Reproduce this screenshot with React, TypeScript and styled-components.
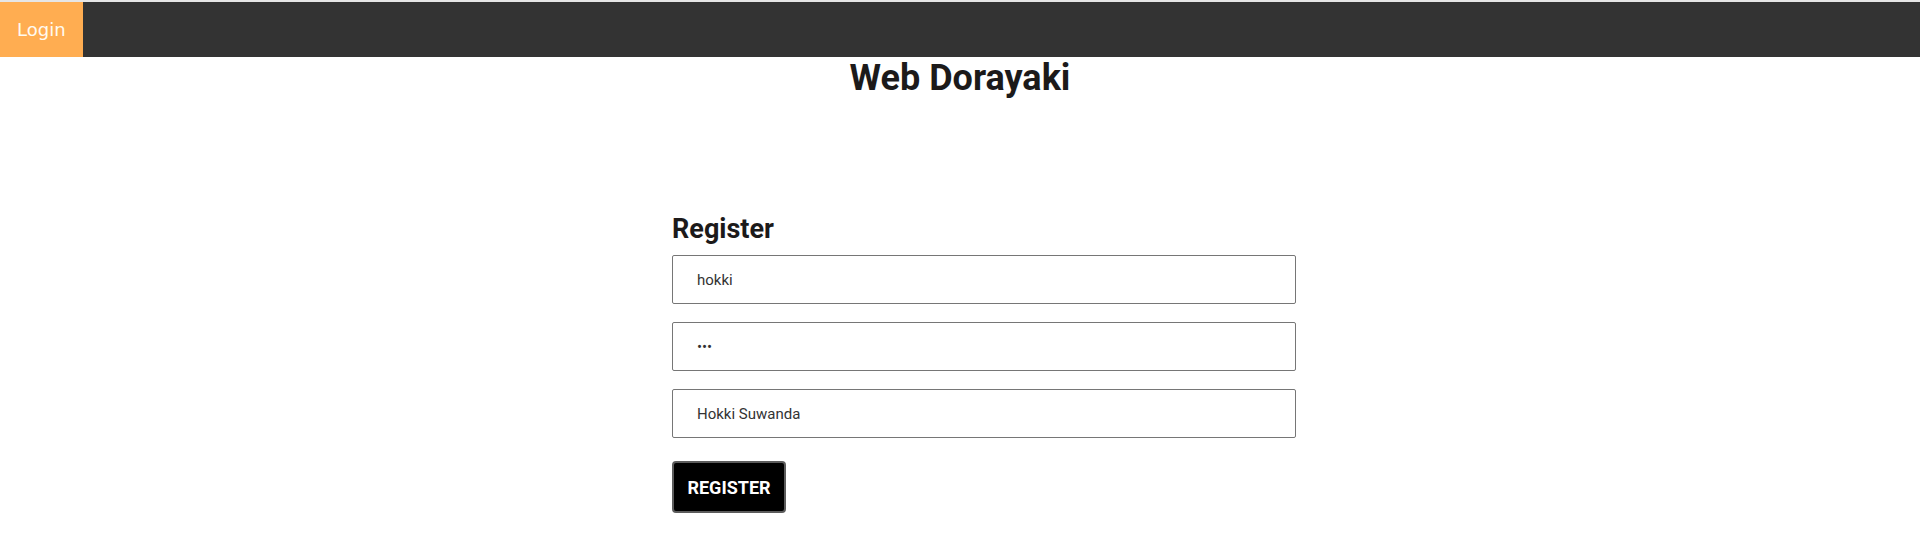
import React from "react";
import styled, { createGlobalStyle } from "styled-components";

const Global = createGlobalStyle`
  html, body { margin: 0; padding: 0; background: #fff; }
  body { font-family: Roboto, "Liberation Sans", sans-serif; }
  * { box-sizing: border-box; }
`;

const TopStrip = styled.div`
  height: 2px;
  background: #e6e6e6;
`;

const NavBar = styled.nav`
  display: flex;
  align-items: stretch;
  height: 55px;
  background: #333333;
`;

const NavLink = styled.a<{ $active?: boolean }>`
  display: flex;
  align-items: center;
  padding: 0 17px;
  font-family: "DejaVu Sans", Verdana, sans-serif;
  font-size: 18px;
  color: #fffaf0;
  text-decoration: none;
  background: ${(p) => (p.$active ? "#ffad51" : "transparent")};
`;

const Title = styled.h1`
  margin: 2px 0 0;
  text-align: center;
  font-family: Roboto, sans-serif;
  font-weight: 700;
  font-size: 36px;
  line-height: 39px;
  color: #1c1a1a;
`;

const FormWrap = styled.form`
  display: flex;
  flex-direction: column;
  width: 32.5%;
  margin: 117px 0 0 35%;
`;

const FormTitle = styled.h2`
  margin: 0 0 12px;
  font-family: Roboto, sans-serif;
  font-weight: 700;
  font-size: 27px;
  line-height: 28px;
  color: #1c1a1a;
`;

const Field = styled.input`
  height: 49px;
  margin-bottom: 18px;
  padding: 0 24px;
  border: 1px solid #767676;
  border-radius: 2px;
  font-family: Roboto, sans-serif;
  font-size: 15px;
  color: #333;
  outline: none;
  background: #fff;
`;

const Submit = styled.button`
  align-self: flex-start;
  width: 114px;
  height: 52px;
  margin-top: 5px;
  background: #000;
  color: #fff;
  border: 2px solid #5c5c5c;
  border-radius: 4px;
  font-family: Roboto, sans-serif;
  font-weight: 700;
  font-size: 18px;
  cursor: pointer;
`;

export default function App() {
  return (
    <>
      <Global />
      <TopStrip />
      <NavBar>
        <NavLink $active href="#">Login</NavLink>
      </NavBar>
      <Title>Web Dorayaki</Title>
      <FormWrap onSubmit={(e) => e.preventDefault()}>
        <FormTitle>Register</FormTitle>
        <Field type="text" defaultValue="hokki" />
        <Field type="password" defaultValue="123" />
        <Field type="text" defaultValue="Hokki Suwanda" />
        <Submit type="submit">REGISTER</Submit>
      </FormWrap>
    </>
  );
}
